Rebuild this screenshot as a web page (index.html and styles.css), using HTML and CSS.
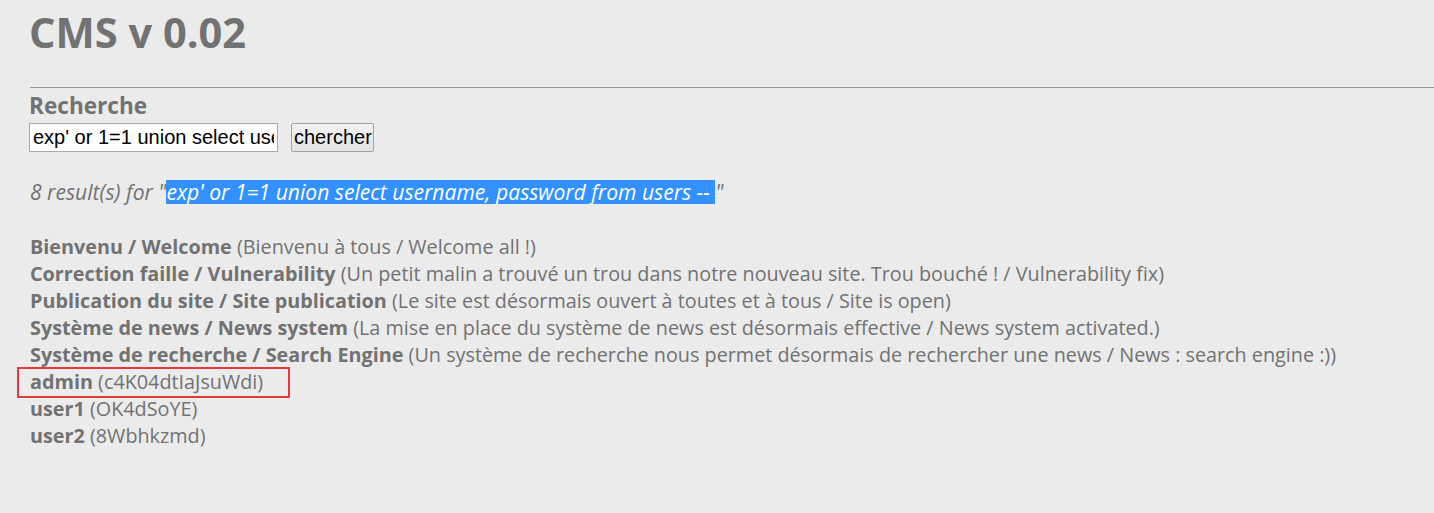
FILE: index.html
```html
<!DOCTYPE html>
<html>
<head>
<meta charset="utf-8">
<link rel="stylesheet" href="styles.css">
</head>
<body>
<div class="page">
  <h1 class="title">CMS v 0.02</h1>
  <hr class="rule">
  <h2 class="section">Recherche</h2>
  <form class="search">
    <input class="field" type="text" value="exp' or 1=1 union select username, password from users -- ">
    <button class="btn" type="button">chercher</button>
  </form>
  <p class="count">8 result(s) for "<span class="sel">exp' or 1=1 union select username, password from users -- </span>"</p>
  <ul class="results">
    <li><b>Bienvenu / Welcome</b> (Bienvenu à tous / Welcome all !)</li>
    <li><b>Correction faille / Vulnerability</b> (Un petit malin a trouvé un trou dans notre nouveau site. Trou bouché ! / Vulnerability fix)</li>
    <li><b>Publication du site / Site publication</b> (Le site est désormais ouvert à toutes et à tous / Site is open)</li>
    <li><b>Système de news / News system</b> (La mise en place du système de news est désormais effective / News system activated.)</li>
    <li><b>Système de recherche / Search Engine</b> (Un système de recherche nous permet désormais de rechercher une news / News : search engine :))</li>
    <li class="marked"><b>admin</b> (c4K04dtIaJsuWdi)<span class="box"></span></li>
    <li><b>user1</b> (OK4dSoYE)</li>
    <li><b>user2</b> (8Wbhkzmd)</li>
  </ul>
</div>
</body>
</html>
```
FILE: styles.css
```css
html, body {
  margin: 0;
  padding: 0;
  background: #ebebeb;
}
body {
  font-family: "Open Sans", "Noto Sans", sans-serif;
  color: #727272;
}
.page {
  padding: 0 0 0 30px;
}
.title {
  margin: 0 0 0 -1px;
  padding-top: 8px;
  font-size: 41.6px;
  line-height: 48px;
  font-weight: 700;
}
.rule {
  margin: 31px 0 0 0;
  border: 0;
  border-top: 1px solid #999;
  height: 0;
}
.section {
  margin: 4px 0 0 -1px;
  font-size: 22.6px;
  line-height: 28px;
  font-weight: 700;
}
.search {
  display: flex;
  align-items: center;
  gap: 13px;
  margin: 3px 0 0 -1px;
}
.field {
  box-sizing: border-box;
  width: 249px;
  height: 29px;
  padding: 0 3px;
  border: 1px solid #a9a9a9;
  background: #fff;
  font-family: "Liberation Sans", Arial, sans-serif;
  font-size: 20px;
  color: #000;
}
.btn {
  box-sizing: border-box;
  width: 83px;
  height: 29px;
  padding: 0 2px;
  border: 1px solid #a3a3a3;
  border-radius: 2px;
  background: linear-gradient(#f2f2f2, #e3e3e3);
  font-family: "Liberation Sans", Arial, sans-serif;
  font-size: 20px;
  color: #000;
}
.count {
  margin: 28px 0 0 0;
  font-style: italic;
  font-size: 21.1px;
  line-height: 24px;
}
.sel {
  display: inline-block;
  height: 24px;
  background: #3390ff;
  color: #fff;
  white-space: pre;
}
.results {
  list-style: none;
  margin: 29px 0 0 0;
  padding: 0;
  font-size: 19.8px;
  line-height: 27px;
}
.results b {
  font-weight: 700;
}
.marked {
  position: relative;
}
.box {
  position: absolute;
  left: -13px;
  top: -1px;
  width: 269px;
  height: 27px;
  border: 2px solid #e53935;
}
```
